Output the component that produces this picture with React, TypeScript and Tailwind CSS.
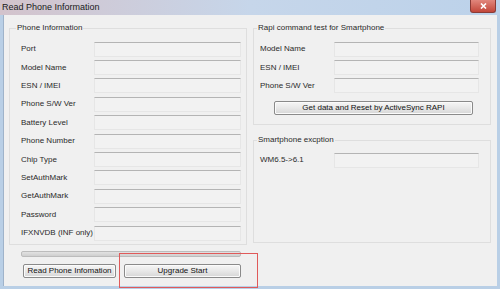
import React from 'react';

const leftRows = [
  'Port',
  'Model Name',
  'ESN / IMEI',
  'Phone S/W Ver',
  'Battery Level',
  'Phone Number',
  'Chip Type',
  'SetAuthMark',
  'GetAuthMark',
  'Password',
  'IFXNVDB (INF only)',
];

const rapiRows = ['Model Name', 'ESN / IMEI', 'Phone S/W Ver'];

function Field() {
  return <div className="h-[15px] flex-1 border border-[#e6e6e6] border-t-[#b4b4b4] bg-[#f2f2f2]" />;
}

function Row({ label, labelWidth }: { label: string; labelWidth: string }) {
  return (
    <div className="flex h-[18.4px] items-center">
      <span className={`${labelWidth} shrink-0 whitespace-nowrap`}>{label}</span>
      <Field />
    </div>
  );
}

function WinButton({ children, className }: { children: React.ReactNode; className: string }) {
  return (
    <div
      className={`flex h-[14px] items-center justify-center rounded-[2px] border border-[#8a8a8a] bg-gradient-to-b from-[#f6f6f6] via-[#e8e8e8] to-[#d6d6d6] text-[#111] shadow-[inset_0_0_0_1px_#fbfbfb] ${className}`}
    >
      {children}
    </div>
  );
}

export default function App() {
  return (
    <div className="relative flex h-[289px] w-[500px] flex-col overflow-hidden bg-[#b9cfe6] font-['Liberation_Sans',Arial,sans-serif] text-[8px] leading-[10px] text-[#2a2a2a]">
      {/* Title bar */}
      <div className="flex h-[15px] shrink-0 items-center justify-between bg-gradient-to-r from-[#d3c3cc] via-[#c6d6ea] to-[#bcd2ea]">
        <span className="pl-[2px] text-[9px] leading-[11px] text-[#1a1a1a]">Read Phone Information</span>
        <div className="mr-[4px] flex h-[13px] w-[26px] items-center justify-center self-start rounded-b-[3px] border border-t-0 border-[#8a3b36] bg-gradient-to-b from-[#e1867c] to-[#c2463a]">
          <svg width="7" height="6" viewBox="0 0 7 6">
            <path d="M1 0.5 L6 5.5 M6 0.5 L1 5.5" stroke="#ffffff" strokeWidth="1.6" />
          </svg>
        </div>
      </div>

      {/* Client area */}
      <div className="mx-[3px] mb-[3px] flex flex-1 border-l border-[#9fb3ca] bg-[#f0f0f0]">
        {/* Left column */}
        <div className="ml-[5px] flex w-[238px] flex-col">
          <fieldset className="mt-[8px] border border-[#dedede] pb-[2px] pl-[6px] pr-[5px]">
            <legend className="px-[1px]">Phone Information</legend>
            <div className="pl-[5px] pt-[7px]">
              {leftRows.map((r) => (
                <Row key={r} label={r} labelWidth="w-[73px]" />
              ))}
            </div>
          </fieldset>
          <div className="ml-[12px] mr-[6px] mt-[6px] h-[6px] rounded-[2px] border border-[#bcbcbc] bg-gradient-to-b from-[#e2e2e2] to-[#cfcfcf]" />
          <div className="ml-[14px] mr-[6px] mt-[7px] flex gap-[8px]">
            <WinButton className="w-[93px]">Read Phone Infomation</WinButton>
            <WinButton className="flex-1">Upgrade Start</WinButton>
          </div>
        </div>

        {/* Right column */}
        <div className="ml-[6px] flex w-[238px] flex-col">
          <fieldset className="mt-[8px] border border-[#dedede] pb-[9px] pl-[3px] pr-[11px]">
            <legend className="px-[1px]">Rapi command test for Smartphone</legend>
            <div className="pl-[3px] pt-[7px]">
              {rapiRows.map((r) => (
                <Row key={r} label={r} labelWidth="w-[74px]" />
              ))}
              <div className="ml-[14px] mr-[6px] mt-[6px]">
                <WinButton className="w-full">Get data and Reset by ActiveSync RAPI</WinButton>
              </div>
            </div>
          </fieldset>
          <fieldset className="mt-[10px] h-[108px] border border-[#dedede] pl-[3px] pr-[11px]">
            <legend className="px-[1px]">Smartphone excption</legend>
            <div className="pl-[3px] pt-[6px]">
              <Row label="WM6.5->6.1" labelWidth="w-[74px]" />
            </div>
          </fieldset>
        </div>
      </div>

      {/* Red annotation box */}
      <div className="pointer-events-none absolute left-[119px] top-[253px] h-[35px] w-[139px] shadow-[inset_0_0_0_1px_#e05a5a]" />
    </div>
  );
}
